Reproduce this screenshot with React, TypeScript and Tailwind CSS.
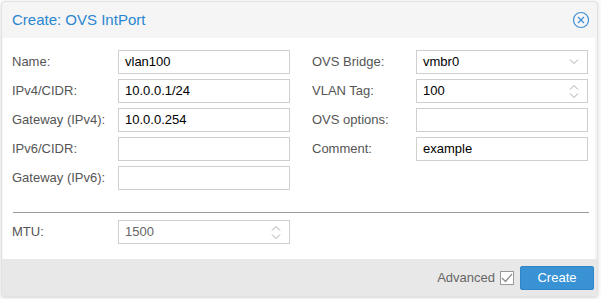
import React from 'react';

const font = { fontFamily: '"Liberation Sans", Arial, sans-serif' };

const Chevron: React.FC<{ up?: boolean }> = ({ up }) => (
  <svg width="10" height="6" viewBox="0 0 10 6" fill="none" stroke="#a8a8a8" strokeWidth="1">
    {up ? <path d="M1 5.5 L5 1.5 L9 5.5" /> : <path d="M1 0.5 L5 4.5 L9 0.5" />}
  </svg>
);

const Spinner: React.FC = () => (
  <div className="flex flex-col gap-[3px]">
    <Chevron up />
    <Chevron />
  </div>
);

interface FieldProps {
  label: string;
  value?: string;
  trigger?: 'combo' | 'spin';
  labelWidth: string;
  muted?: boolean;
}

const Field: React.FC<FieldProps> = ({ label, value, trigger, labelWidth, muted }) => (
  <div className="flex items-center h-[24px]">
    <div className={`${labelWidth} text-[13px] text-[#555]`}>{label}</div>
    <div className="w-[172px] h-[24px] border border-[#cfcfcf] bg-white flex items-center pl-[6px] pr-[8px]">
      <span className={`flex-1 text-[13px] ${muted ? 'text-[#666]' : 'text-black'}`}>{value}</span>
      {trigger === 'combo' && <Chevron />}
      {trigger === 'spin' && <Spinner />}
    </div>
  </div>
);

export default function App() {
  return (
    <div className="w-[601px] h-[299px] bg-[#fafafa] pt-[1px] pl-[1px]" style={font}>
      <div className="w-[597px] h-[296px] rounded-[4px] border border-[#e2e2e2] bg-[#f5f5f5] flex flex-col overflow-hidden shadow-[0_1px_3px_rgba(0,0,0,0.12)]">
        <div className="h-[36px] flex items-center justify-between pl-[10px] pr-[7px]">
          <span className="text-[15px] text-[#2b86d1]">Create: OVS IntPort</span>
          <svg width="18" height="18" viewBox="0 0 18 18" fill="none" stroke="#3a8fd6" strokeWidth="1.2">
            <circle cx="9" cy="9" r="7.5" />
            <path d="M6 6 L12 12 M12 6 L6 12" />
          </svg>
        </div>
        <div className="flex-1 bg-white ml-[1px] mr-[2px] pt-[12px] pl-[9px] pr-[8px] flex flex-col">
          <div className="flex gap-[22px]">
            <div className="flex flex-col gap-[5px]">
              <Field label="Name:" value="vlan100" labelWidth="w-[106px]" />
              <Field label="IPv4/CIDR:" value="10.0.0.1/24" labelWidth="w-[106px]" />
              <Field label="Gateway (IPv4):" value="10.0.0.254" labelWidth="w-[106px]" />
              <Field label="IPv6/CIDR:" labelWidth="w-[106px]" />
              <Field label="Gateway (IPv6):" labelWidth="w-[106px]" />
            </div>
            <div className="flex flex-col gap-[5px]">
              <Field label="OVS Bridge:" value="vmbr0" trigger="combo" labelWidth="w-[104px]" />
              <Field label="VLAN Tag:" value="100" trigger="spin" labelWidth="w-[104px]" />
              <Field label="OVS options:" labelWidth="w-[104px]" />
              <Field label="Comment:" value="example" labelWidth="w-[104px]" />
            </div>
          </div>
          <div className="mt-[22px] ml-[1px] h-px bg-[#9a9a9a] w-[576px]" />
          <div className="mt-[7px]">
            <Field label="MTU:" value="1500" trigger="spin" labelWidth="w-[106px]" muted />
          </div>
        </div>
        <div className="h-[37px] bg-[#e8e8e8] flex items-center justify-end pr-[3px]">
          <span className="text-[13px] text-[#666] mr-[5px]">Advanced</span>
          <div className="w-[14px] h-[14px] border border-[#9a9a9a] bg-white flex items-center justify-center mr-[6px]">
            <svg width="12" height="10" viewBox="0 0 12 10" fill="none" stroke="#8a8a8a" strokeWidth="1.2">
              <path d="M1 5 L4.5 8.5 L11 1" />
            </svg>
          </div>
          <button className="w-[74px] h-[24px] rounded-[2px] bg-[#3892d4] border border-[#2f86c8] text-white text-[13px]">
            Create
          </button>
        </div>
      </div>
    </div>
  );
}
